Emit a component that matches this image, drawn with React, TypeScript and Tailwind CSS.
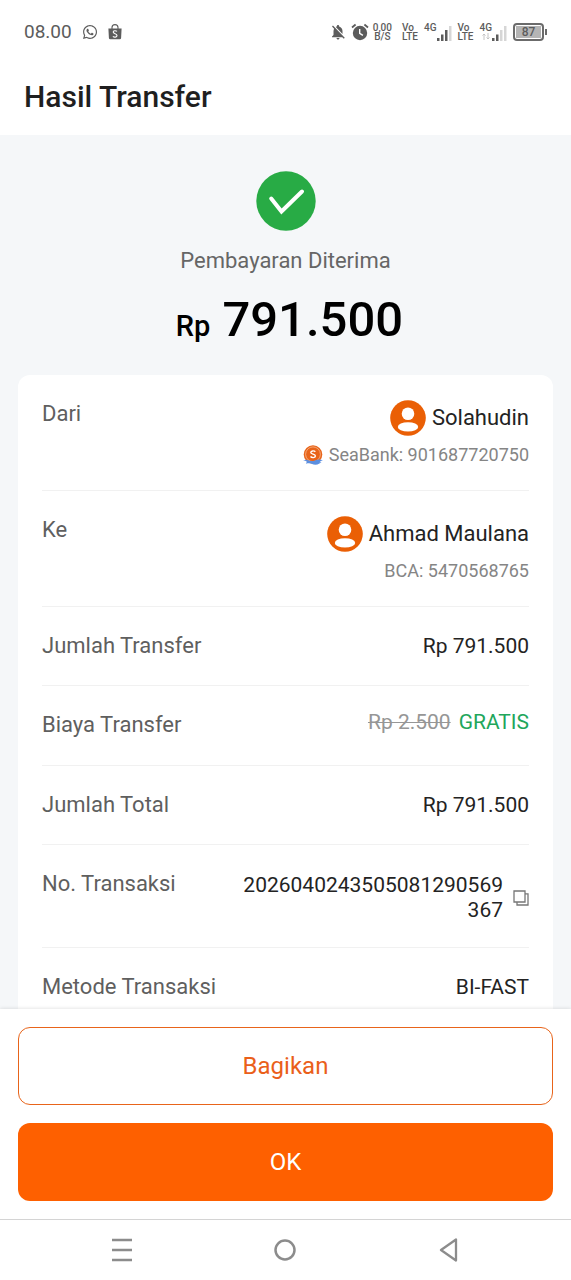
import type { ReactNode } from "react"
import { FaWhatsapp } from "react-icons/fa"
import { MdNotificationsOff } from "react-icons/md"

interface Party {
  label: string
  name: string
  account: string
  logo?: boolean
}

const parties: Party[] = [
  { label: "Dari", name: "Solahudin", account: "SeaBank: 901687720750", logo: true },
  { label: "Ke", name: "Ahmad Maulana", account: "BCA: 5470568765" },
]

function BagIcon() {
  return (
    <svg viewBox="0 0 14 16" className="w-3.5 h-4" aria-hidden="true">
      <path d="M4 5V3.6a3 3 0 0 1 6 0V5" fill="none" stroke="#5c5c5c" strokeWidth="1.1" />
      <path d="M0.4 4.4h13.2l-.5 9.6a1.4 1.4 0 0 1-1.4 1.3H2.3a1.4 1.4 0 0 1-1.4-1.3z" fill="#5c5c5c" />
      <path d="M9 7.4C8 6.4 5.2 6.3 5.2 8.1c0 2 3.8 1.4 3.8 3.5 0 1.9-2.9 1.9-4.1.7" fill="none" stroke="#fff" strokeWidth="1.1" />
    </svg>
  )
}

function AlarmIcon() {
  return (
    <svg viewBox="0 0 18 18" className="w-[18px] h-[18px]" aria-hidden="true">
      <circle cx="9" cy="10" r="7.2" fill="#5c5c5c" />
      <path d="M1 4.5 4.6 1.5M17 4.5 13.4 1.5" stroke="#5c5c5c" strokeWidth="1.8" />
      <path d="M8.7 6v4.3l3.2 2" fill="none" stroke="#fff" strokeWidth="1.4" />
    </svg>
  )
}

function Volte() {
  return (
    <span className="w-4 text-[10px] leading-[9px] font-medium">
      Vo<br />LTE
    </span>
  )
}

function Signal({ weak }: { weak?: boolean }) {
  return (
    <div className="flex items-start">
      <div className="flex flex-col items-center">
        <span className="text-[10px] leading-[10px] font-medium">4G</span>
        {weak && (
          <svg viewBox="0 0 8 7" className="w-2 h-[7px]" fill="none" stroke="#c4c4c4" aria-hidden="true">
            <path d="M2 7V1M.5 2.5 2 1l1.5 1.5M6 0v6M4.5 4.5 6 6l1.5-1.5" />
          </svg>
        )}
      </div>
      <svg viewBox="0 0 15 19" className="w-[15px] h-[19px]" aria-hidden="true">
        <path d="M0 15h2.5v3H0zM4 11.5h2.5V18H4z" fill="#5c5c5c" />
        <path d="M8 7h2.5v11H8z" fill={weak ? "#d6d6d6" : "#5c5c5c"} />
        <path d="M12 3h2.5v15H12z" fill="#d6d6d6" />
      </svg>
    </div>
  )
}

function StatusBar() {
  return (
    <div className="flex items-center justify-between h-16 px-6 text-[#5c5c5c]">
      <div className="flex items-center gap-2.5">
        <span className="text-[19px]">08.00</span>
        <FaWhatsapp size={16} />
        <BagIcon />
      </div>
      <div className="flex items-center gap-1.5">
        <div className="flex items-center gap-1 pr-1">
          <MdNotificationsOff size={18} />
          <AlarmIcon />
          <span className="text-[10px] leading-[9px] font-medium text-center">0,00<br />B/S</span>
        </div>
        <Volte />
        <Signal />
        <Volte />
        <Signal weak />
        <div className="flex items-center gap-px">
          <div className="rounded-[4px] border-2 border-[#6b6b6b] p-px">
            <div className="w-[25px] h-3 bg-[#b5b5b5] text-[12px] leading-3 font-medium text-center">87</div>
          </div>
          <div className="w-0.5 h-1.5 bg-[#6b6b6b]" />
        </div>
      </div>
    </div>
  )
}

function Avatar() {
  return (
    <svg viewBox="0 0 36 36" className="size-9" aria-hidden="true">
      <circle cx="18" cy="18" r="17.8" fill="#ea5f05" />
      <circle cx="18" cy="13.8" r="6.3" fill="#fff" />
      <ellipse cx="18" cy="26.9" rx="10.2" ry="4.7" fill="#fff" />
    </svg>
  )
}

function SeaBankLogo() {
  return (
    <svg viewBox="0 0 20 20" className="size-5" aria-hidden="true">
      <circle cx="10" cy="9.5" r="9.3" fill="#e8641a" />
      <circle cx="10" cy="9.3" r="7.4" fill="none" stroke="#f9c39c" strokeWidth=".7" />
      <path d="M12.3 6.8c-1-1.3-4.5-1.2-4.5.7 0 2 4.6 1.3 4.6 3.5 0 2-3.6 2-4.9.6" fill="none" stroke="#fff" strokeWidth="1.4" />
      <path d="M0 15.5c2.5-1.3 4-.7 6 0s4 1 6.5-.2 5-.8 7.5 0c-1.5.4-2.5 1-3.5 1.9 1 0 1.5 0 2.2.3-2 .5-3.2 2.3-6.2 2.3s-4-1.5-6.5-1.5c-1.5 0-2 .3-3 .2 0-.8.6-1.3 1.2-1.6C2.7 16 1.5 15.5 0 15.5z" fill="#5b8fe0" />
    </svg>
  )
}

function CopyIcon() {
  return (
    <svg viewBox="0 0 16 16" className="size-4" fill="none" stroke="#777" strokeWidth="1.3" aria-hidden="true">
      <path d="M1 1h11v11H1zM12 3.8h3V15H4v-3" />
    </svg>
  )
}

function Row({ label, children }: { label: string; children: ReactNode }) {
  return (
    <div className="flex items-start justify-between gap-4 py-6 border-b border-[#f1f1f1] last:border-0">
      <dt className="shrink-0 text-[22px] leading-[30px] text-[#5f5f5f]">{label}</dt>
      <dd className="text-right text-[#232323]">{children}</dd>
    </div>
  )
}

export default function App() {
  return (
    <div className="flex flex-col h-screen bg-white font-[Roboto,sans-serif]">
      <header>
        <StatusBar />
        <h1 className="px-6 pt-[13px] pb-[18px] text-3xl leading-10 font-medium text-[#1f1f1f]">Hasil Transfer</h1>
      </header>

      <main className="flex-1 min-h-0 overflow-hidden bg-[#f5f7f9] px-[18px]">
        <div className="flex flex-col items-center pt-9 pb-[26px]">
          <svg viewBox="0 0 60 60" className="size-[60px]" aria-hidden="true">
            <circle cx="30" cy="30" r="29.7" fill="#28ab45" />
            <path d="M15.2 27.5 25.5 40.5 46 20.5" fill="none" stroke="#fff" strokeWidth="4" strokeLinecap="round" />
          </svg>
          <p className="mt-3.5 text-[22px] leading-8 text-[#666]">Pembayaran Diterima</p>
          <p className="flex items-baseline gap-3 mt-3.5 pl-2 font-medium text-black">
            <span className="text-[29px] leading-8">Rp</span>
            <span className="text-[49px] leading-[58px]">791.500</span>
          </p>
        </div>

        <dl className="rounded-xl bg-white px-6 text-[21px] leading-[30px]">
          {parties.map(p => (
            <Row key={p.label} label={p.label}>
              <div className="flex items-center justify-end gap-1.5 text-[22px] leading-[38px]">
                <Avatar />
                {p.name}
              </div>
              <div className="flex items-center justify-end gap-1.5 mt-[7px] text-[18px] leading-[22px] text-[#858585]">
                {p.logo && <SeaBankLogo />}
                {p.account}
              </div>
            </Row>
          ))}
          <Row label="Jumlah Transfer">Rp 791.500</Row>
          <Row label="Biaya Transfer">
            <div className="flex gap-2 pb-[7px] leading-6">
              <s className="text-[#969696] decoration-1">Rp 2.500</s>
              <span className="text-[#21a65b]">GRATIS</span>
            </div>
          </Row>
          <Row label="Jumlah Total">Rp 791.500</Row>
          <Row label="No. Transaksi">
            <div className="flex items-center gap-2.5 pt-1">
              <span className="max-w-[270px] break-all leading-[25px]">2026040243505081290569367</span>
              <button type="button" aria-label="Salin"><CopyIcon /></button>
            </div>
          </Row>
          <Row label="Metode Transaksi">BI-FAST</Row>
        </dl>
      </main>

      <footer className="relative flex flex-col gap-[18px] p-[18px] bg-white text-2xl shadow-[0_0_4px_rgba(0,0,0,0.15)]">
        <button type="button" className="h-[78px] rounded-xl border border-[#e8641a] text-[#ea5f1a]">Bagikan</button>
        <button type="button" className="h-[78px] rounded-xl bg-[#fe6000] text-white">OK</button>
      </footer>

      <nav className="relative flex items-center justify-around h-[61px] px-10 border-t border-[#d4d4d4] bg-white">
        <button type="button" aria-label="Recent">
          <svg viewBox="0 0 24 24" className="size-6" stroke="#8c8c8c" strokeWidth="2.5">
            <path d="M2 2h20M2 12h20M2 22h20" />
          </svg>
        </button>
        <button type="button" aria-label="Home">
          <svg viewBox="0 0 24 24" className="size-6" fill="none" stroke="#8c8c8c" strokeWidth="2.5">
            <circle cx="12" cy="12" r="9.5" />
          </svg>
        </button>
        <button type="button" aria-label="Back">
          <svg viewBox="0 0 24 24" className="size-6" fill="none" stroke="#8c8c8c" strokeWidth="2.3" strokeLinejoin="round">
            <path d="M19 1.5v21L4 12z" />
          </svg>
        </button>
      </nav>
    </div>
  )
}
